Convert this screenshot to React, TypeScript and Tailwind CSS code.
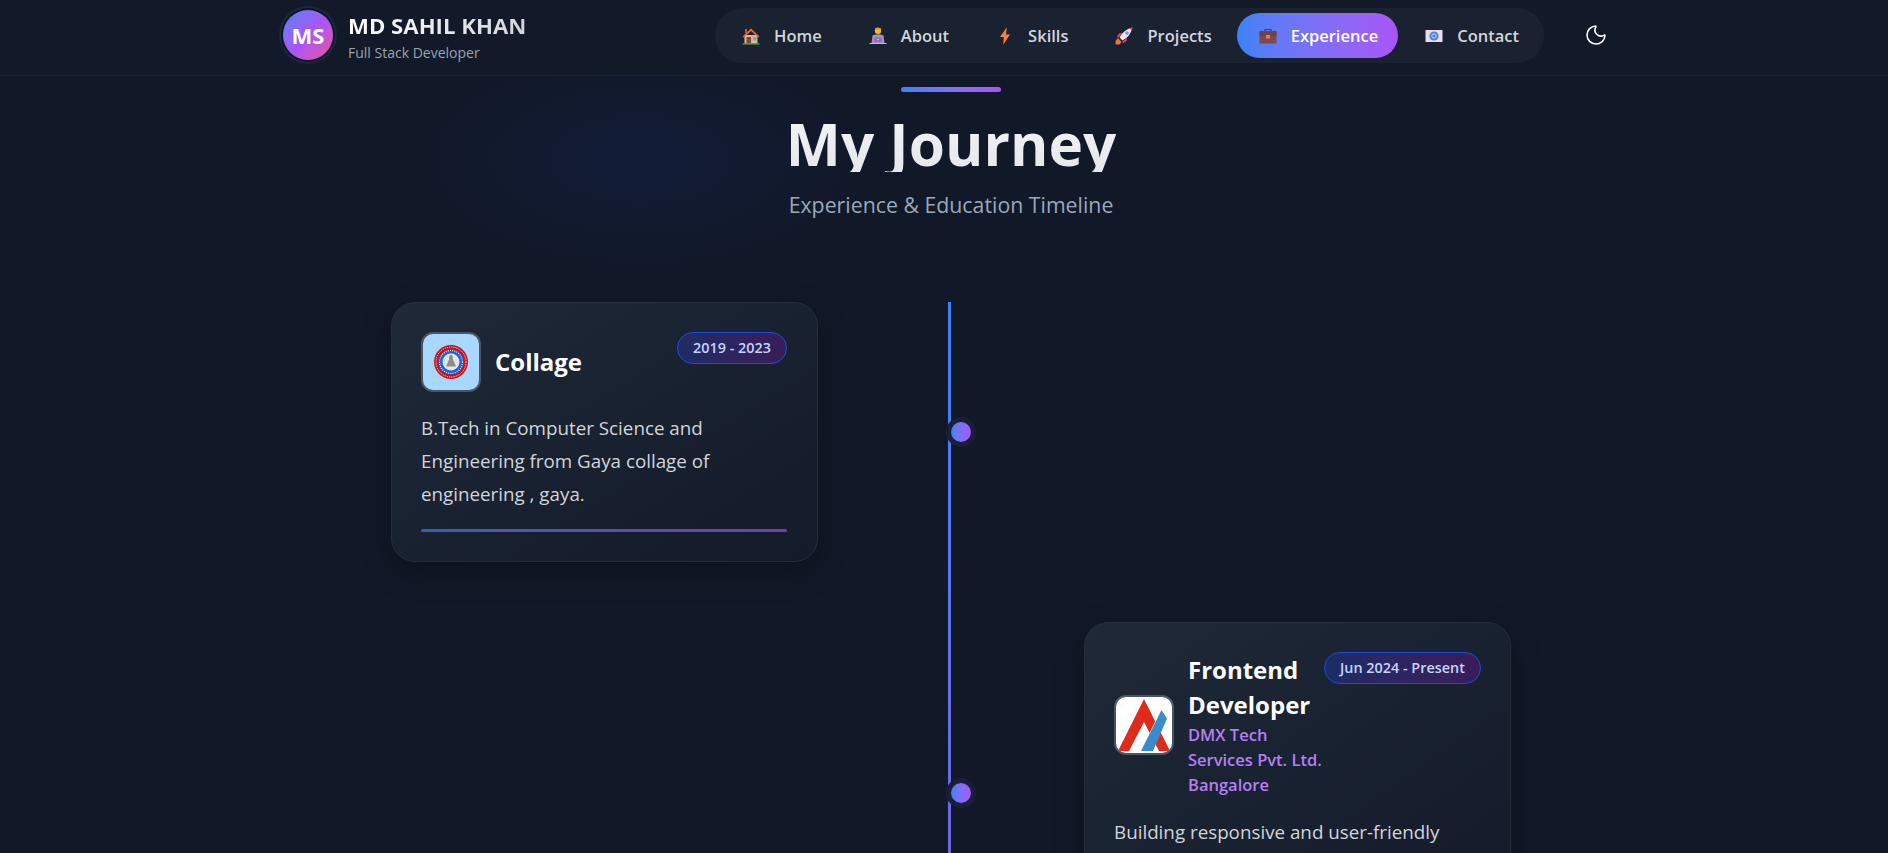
import React from 'react'
import { Moon } from 'lucide-react'

function HomeIcon() {
  return (
    <svg viewBox="0 0 18 18" className="w-[18px] h-[18px]">
      <rect x="2.5" y="8" width="13" height="8.5" fill="#e8b48c" />
      <path d="M9 1.5 L17.5 9.5 L16 10.5 L9 4 L2 10.5 L0.5 9.5 Z" fill="#e8683f" />
      <rect x="3" y="2" width="2" height="4" fill="#c8563a" />
      <rect x="4.5" y="10" width="4.5" height="6.5" fill="#6d4c41" />
      <rect x="11" y="10" width="3.5" height="3.5" fill="#4fb3e8" />
      <rect x="0.5" y="16.3" width="17" height="1.2" fill="#4caf50" />
    </svg>
  )
}

function AboutIcon() {
  return (
    <svg viewBox="0 0 18 18" className="w-[18px] h-[18px]">
      <circle cx="9" cy="3.8" r="3.2" fill="#f2b632" />
      <rect x="6.5" y="1" width="5" height="1.5" fill="#d99a1f" />
      <path d="M3.5 8.5 Q9 6 14.5 8.5 L15.5 16 L2.5 16 Z" fill="#a88cc4" />
      <rect x="5.5" y="10.5" width="7" height="4.5" fill="#8a6fab" />
      <rect x="8.2" y="12" width="1.6" height="1.2" fill="#d9c8ea" />
      <rect x="0.5" y="16" width="17" height="1" fill="#e9c04a" />
    </svg>
  )
}

function SkillsIcon() {
  return (
    <svg viewBox="0 0 18 18" className="w-[18px] h-[18px]">
      <path d="M10.8 0.3 L4 10 L7.8 10 L7.2 17.7 L14 7.5 L10 7.5 Z" fill="#f5803e" />
    </svg>
  )
}

function ProjectsIcon() {
  return (
    <svg viewBox="0 0 18 18" className="w-[18px] h-[18px]">
      <path d="M3 11 L0.5 14 L0.5 17.5 L4.5 17.5 L6.5 15 Z" fill="#e8763c" />
      <path d="M4 10 L1.5 10.5 L4 6.5 L7 6 Z" fill="#ec3f76" />
      <path d="M8 14 L7.5 16.5 L11.5 14 L12 11 Z" fill="#ec3f76" />
      <path d="M4.5 10.5 Q8 3 17.5 0.5 Q15 10 7.5 13.5 Z" fill="#e9e3ee" />
      <circle cx="12" cy="6" r="1.8" fill="#6a9ae0" />
      <path d="M14.5 1.3 L17.5 0.5 L16.7 3.5 Z" fill="#ec3f76" />
    </svg>
  )
}

function ExperienceIcon() {
  return (
    <svg viewBox="0 0 18 18" className="w-[18px] h-[18px]">
      <path d="M6 4 V2.5 H12 V4" fill="none" stroke="#5a3538" strokeWidth="1.2" />
      <rect x="0.5" y="4" width="17" height="12.5" rx="1" fill="#7b4a4f" />
      <rect x="0.5" y="4" width="17" height="5" rx="1" fill="#6f4148" />
      <rect x="7" y="8" width="4" height="3.5" fill="#d9825c" />
    </svg>
  )
}

function ContactIcon() {
  return (
    <svg viewBox="0 0 18 18" className="w-[18px] h-[18px]">
      <rect x="0.5" y="3" width="17" height="12" fill="#ecdcf2" />
      <circle cx="9" cy="9" r="4.6" fill="#4f86d8" />
      <circle cx="9" cy="9" r="2.2" fill="none" stroke="#bcd4f2" strokeWidth="1" />
    </svg>
  )
}

function CollegeLogo() {
  return (
    <svg viewBox="0 0 56 56" className="w-full h-full">
      <circle cx="28" cy="28" r="17" fill="#c2161f" />
      <circle cx="28" cy="28" r="15" fill="none" stroke="#f3d6d6" strokeWidth="1" strokeDasharray="1.2 1" />
      <circle cx="28" cy="28" r="12.5" fill="#1d63e0" />
      <circle cx="28" cy="28" r="11.5" fill="none" stroke="#dbe7fb" strokeWidth="1.2" strokeDasharray="1 1.2" />
      <circle cx="28" cy="28" r="8.5" fill="#dfe7e6" />
      <path d="M28 21 a1.8 1.8 0 0 1 1.8 1.8 L30 25.5 L33 32.5 L23 32.5 L26 25.5 L26.2 22.8 a1.8 1.8 0 0 1 1.8 -1.8 Z" fill="#8a8f8c" />
    </svg>
  )
}

function DmxLogo() {
  return (
    <svg viewBox="0 0 56 56" className="w-full h-full">
      <path d="M28 2 L54 54 L43 54 L28 25 L13 54 L2 54 Z" fill="#e12b1a" />
      <path d="M45 12 L51 21 L36 54 L25 54 Z" fill="#fff" />
      <path d="M45.5 13 L51 21.5 L37 54 L25 54 Z" fill="#3a8bcb" />
    </svg>
  )
}

const navItems = [
  { label: 'Home', icon: <HomeIcon /> },
  { label: 'About', icon: <AboutIcon /> },
  { label: 'Skills', icon: <SkillsIcon /> },
  { label: 'Projects', icon: <ProjectsIcon /> },
  { label: 'Experience', icon: <ExperienceIcon />, active: true },
  { label: 'Contact', icon: <ContactIcon /> },
]

function Badge({ children }: { children: React.ReactNode }) {
  return (
    <span className="shrink-0 h-8 px-[15px] flex items-center rounded-full border border-[#1d4ed8] bg-gradient-to-r from-[#1c2c66] to-[#3a1c5a] text-[14.4px] font-semibold text-[#c3d5fb] whitespace-nowrap">
      {children}
    </span>
  )
}

function Card({ children }: { children: React.ReactNode }) {
  return (
    <div className="w-[427px] pl-[29px] pr-[30px] py-[29px] rounded-3xl border border-[#262e3c] bg-gradient-to-br from-[#1f2937] to-[#131a2a] shadow-[0_10px_30px_rgba(0,0,0,0.25)]">
      {children}
    </div>
  )
}

export default function App() {
  return (
    <div className="relative h-[853px] overflow-hidden bg-[#111827] font-['Open_Sans','Noto_Sans',sans-serif]">
      {/* background glow */}
      <div className="absolute left-[400px] top-[40px] w-[480px] h-[240px] rounded-full bg-[radial-gradient(closest-side,#131c38,transparent)]" />

      {/* header */}
      <header className="relative h-[76px] bg-[#121929] border-b border-[#1c2433]">
        <div className="w-[1328px] mx-auto h-full flex items-start justify-between">
          <div className="flex items-start gap-[15px]">
            <div className="w-[50px] h-[50px] mt-[10px] ml-[3px] rounded-full bg-gradient-to-br from-[#3b82f6] via-[#a855f7] to-[#ec4899] shadow-[0_0_0_2px_#0f1524,0_0_0_4px_#1b2740] flex items-center justify-center text-[22px] font-bold text-white">
              MS
            </div>
            <div className="mt-[11px] flex flex-col">
              <span className="text-[22.2px] leading-[30px] font-bold text-transparent bg-clip-text bg-gradient-to-r from-white to-[#d1d5db]">MD SAHIL KHAN</span>
              <span className="text-sm leading-6 font-medium text-[#9ca3af]">Full Stack Developer</span>
            </div>
          </div>
          <div className="flex items-start pt-2">
            <nav className="h-[55px] p-[5px] flex gap-[5px] rounded-[28px] bg-[#1a2130]">
              {navItems.map((item) => (
                <a
                  key={item.label}
                  className={`h-[45px] px-5 pt-px flex items-center gap-3 rounded-3xl text-[16.5px] font-semibold ${
                    item.active
                      ? 'bg-gradient-to-r from-[#3b82f6] to-[#a855f7] text-white'
                      : 'text-[#d1d5db]'
                  }`}
                >
                  <span className="w-[22px] flex justify-center">{item.icon}</span>
                  {item.label}
                </a>
              ))}
            </nav>
            <button className="ml-[40px] mt-[15px] text-white">
              <Moon size={24} strokeWidth={1.6} />
            </button>
          </div>
        </div>
      </header>

      <main className="relative w-[1120px] ml-[391px]">
        {/* title */}
        <div className="flex flex-col items-center pt-[11px]">
          <div className="w-[100px] h-[5px] rounded-full bg-gradient-to-r from-[#3b82f6] to-[#a855f7]" />
          <h1 className="mt-[23px] text-[58.5px] leading-[57px] font-bold text-transparent bg-clip-text bg-gradient-to-b from-[#f3f4f6] to-[#e5e7eb]">My Journey</h1>
          <p className="mt-[19px] text-[21.3px] leading-7 text-[#9aa8bc]">Experience &amp; Education Timeline</p>
        </div>

        {/* timeline */}
        <div className="relative mt-[83px] flex flex-col gap-[60px]">
          <div className="absolute left-[557px] top-0 bottom-0 w-[3px] bg-gradient-to-b from-[#3b82f6] to-[#7561e6]" />
          <div className="absolute left-[560px] top-[120px] w-5 h-5 rounded-full bg-gradient-to-r from-[#3b82f6] to-[#a855f7] ring-[5px] ring-[#191f3a]" />
          <div className="absolute left-[560px] top-[481px] w-5 h-5 rounded-full bg-gradient-to-r from-[#3b82f6] to-[#a855f7] ring-[5px] ring-[#191f3a]" />

          <div className="relative flex justify-start">
            <Card>
              <div className="flex items-start justify-between">
                <div className="flex items-center gap-[14px]">
                  <div className="w-[60px] h-[60px] rounded-xl border-2 border-[#4b5563] bg-[#a8d8ff] overflow-hidden">
                    <CollegeLogo />
                  </div>
                  <h3 className="text-2xl font-bold text-white">Collage</h3>
                </div>
                <Badge>2019 - 2023</Badge>
              </div>
              <p className="mt-5 text-[18.8px] leading-[33px] text-[#d1d5db]">
                B.Tech in Computer Science and Engineering from Gaya collage of engineering , gaya.
              </p>
              <div className="mt-[18px] h-[3px] rounded-full bg-gradient-to-r from-[#3260b0] to-[#7040a8]" />
            </Card>
          </div>

          <div className="relative flex justify-end">
            <Card>
              <div className="flex items-start justify-between">
                <div className="flex items-center gap-[14px]">
                  <div className="shrink-0 w-[60px] h-[60px] rounded-xl border-2 border-[#4b5563] bg-white overflow-hidden">
                    <DmxLogo />
                  </div>
                  <div className="w-[136px]">
                    <h3 className="text-2xl leading-[35px] font-bold text-white">Frontend Developer</h3>
                    <p className="text-[16.5px] leading-[25px] font-semibold text-[#b67ef5]">DMX Tech Services Pvt. Ltd. Bangalore</p>
                  </div>
                </div>
                <Badge>Jun 2024 - Present</Badge>
              </div>
              <p className="mt-[19px] text-[18.8px] leading-[33px] text-[#d1d5db]">
                Building responsive and user-friendly web applications with React.
              </p>
              <div className="mt-[18px] h-[3px] rounded-full bg-gradient-to-r from-[#3260b0] to-[#7040a8]" />
            </Card>
          </div>
        </div>
      </main>
    </div>
  )
}
